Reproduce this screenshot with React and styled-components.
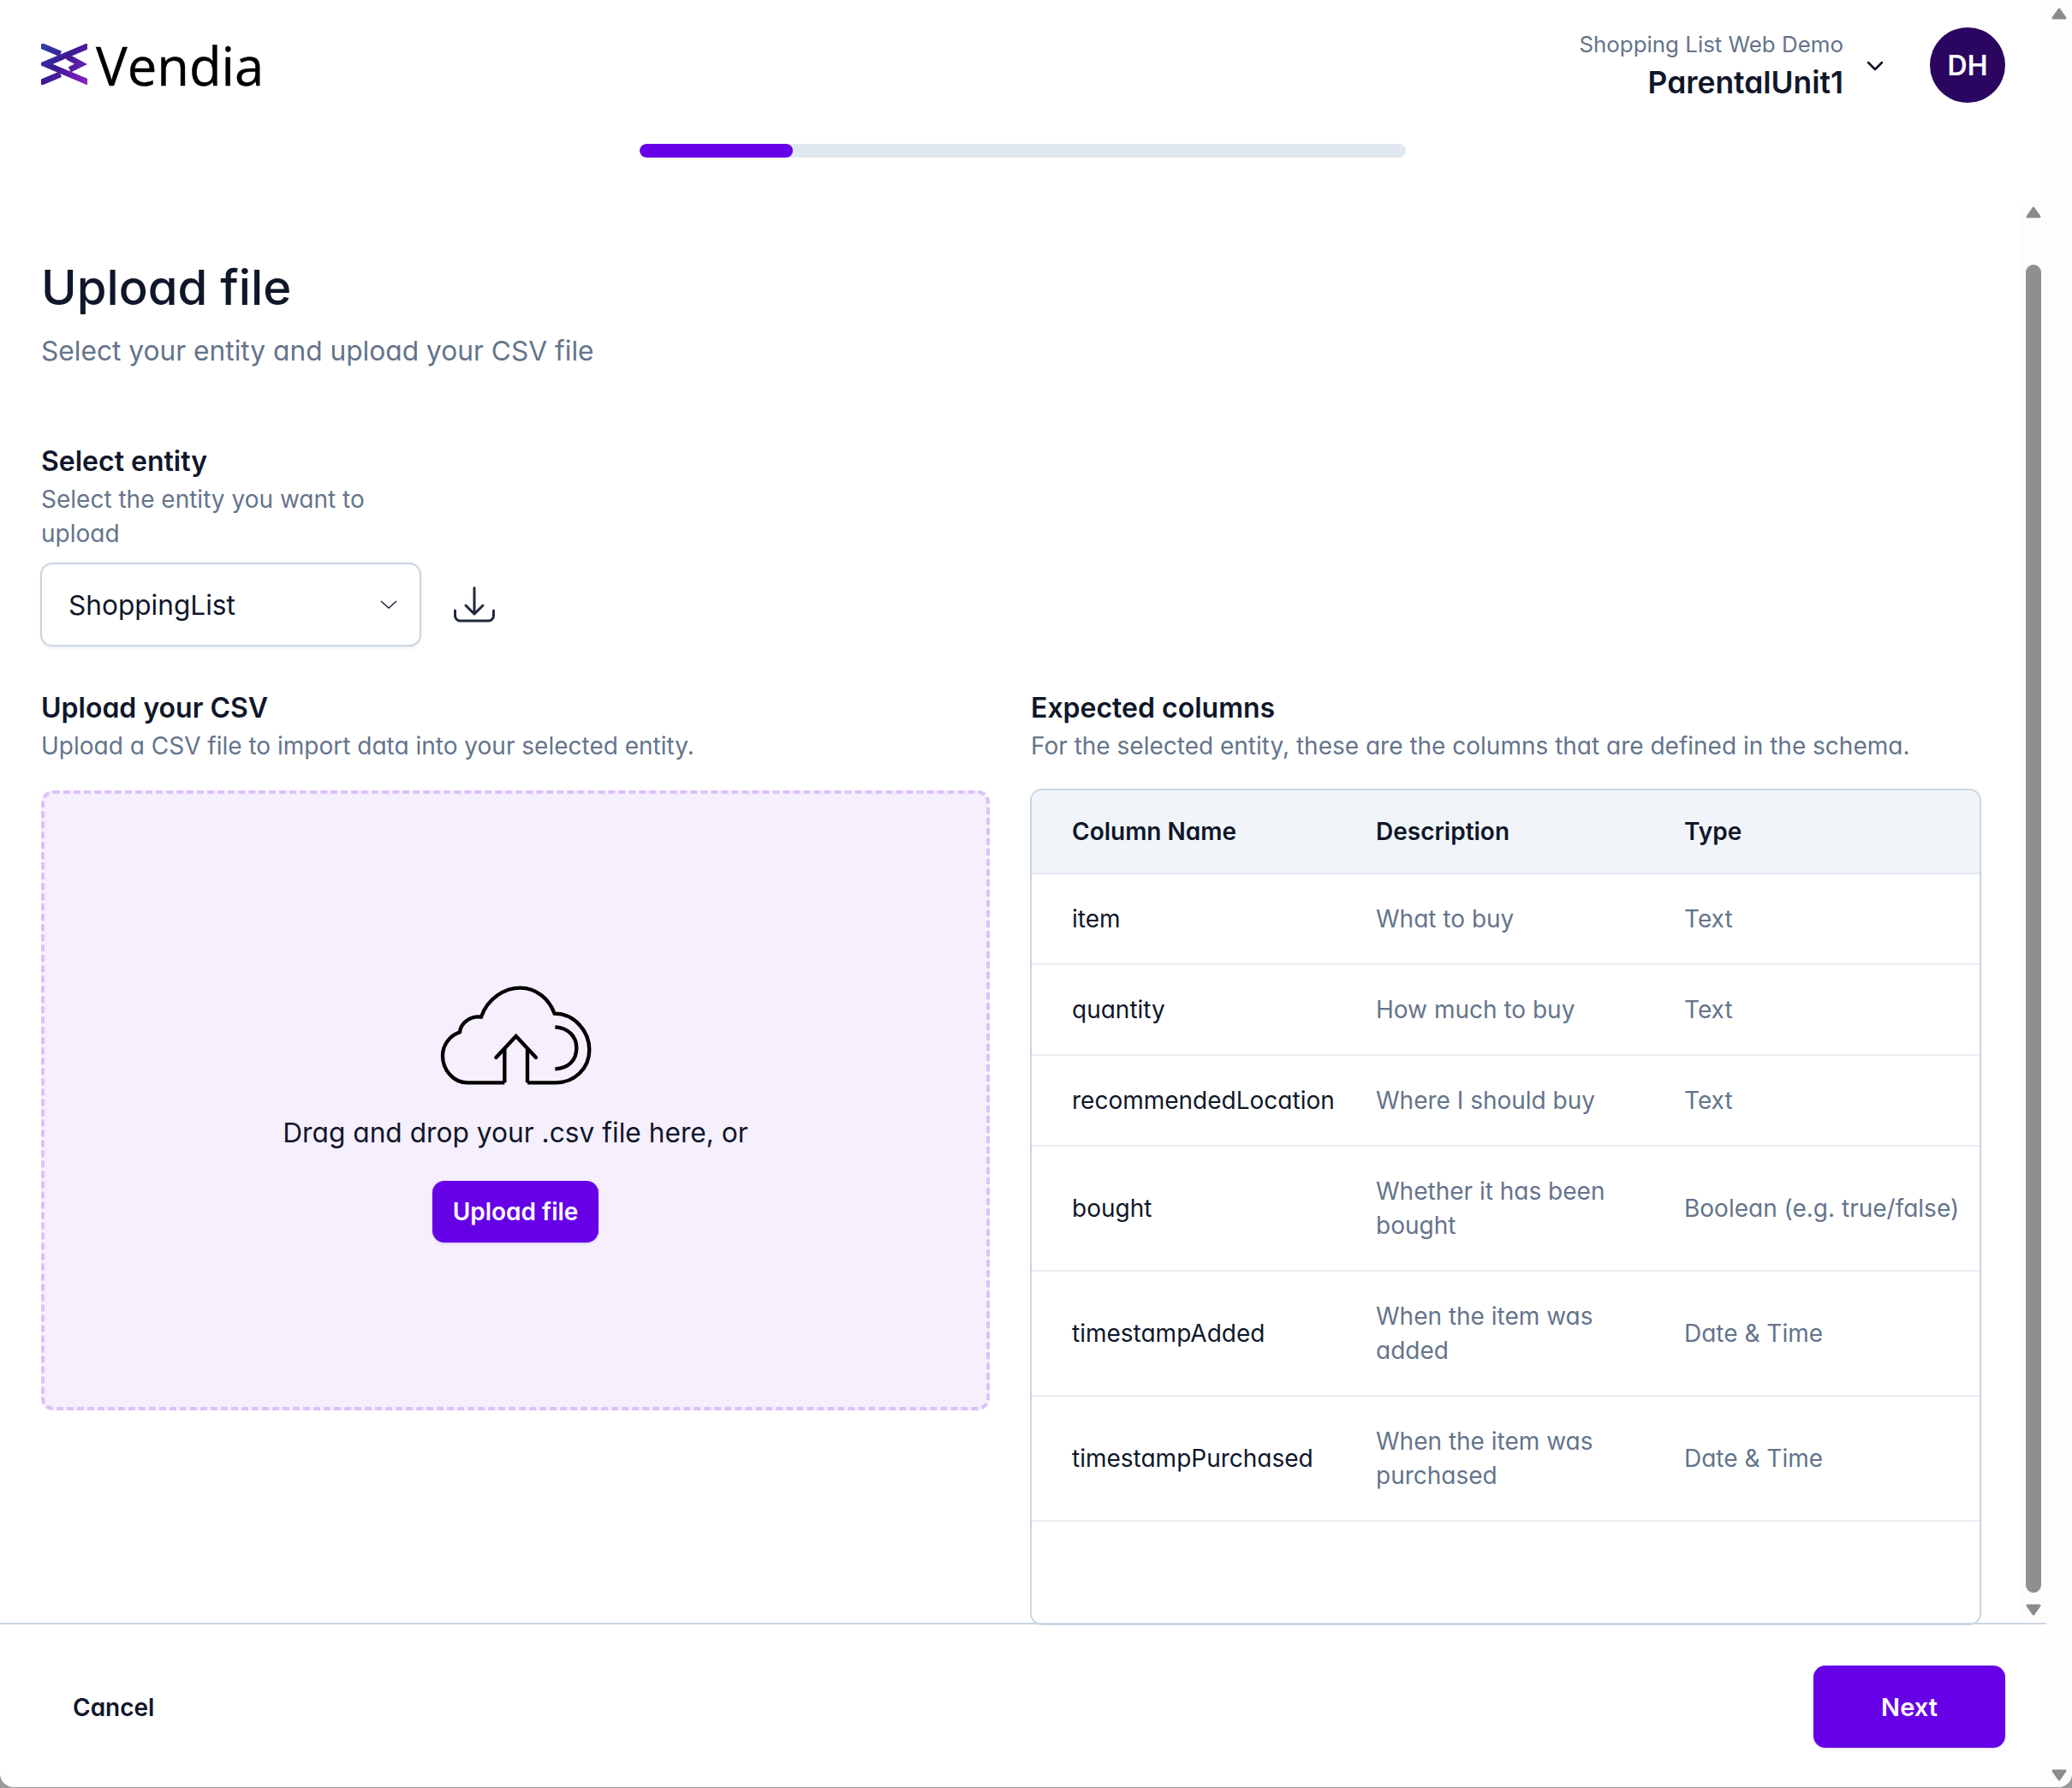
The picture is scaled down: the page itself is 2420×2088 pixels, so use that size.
import React from "react";
import styled, { createGlobalStyle } from "styled-components";

const Global = createGlobalStyle`
  * { box-sizing: border-box; }
  html, body { margin: 0; padding: 0; background: #9a9a9a; }
  body {
    font-family: Inter, "Noto Sans", "Liberation Sans", sans-serif;
    font-feature-settings: "cv11" 1;
    color: #0f172a;
  }
`;

const Window = styled.div`
  width: 2420px;
  height: 2087px;
  display: flex;
  background: #fff;
  border-radius: 0 0 16px 16px;
  overflow: hidden;
`;
const Main = styled.div`
  width: 2390px;
  display: flex;
  flex-direction: column;
`;
const OuterBar = styled.div`
  flex: 1;
  background: #fdfdfd;
  padding: 9px 6px 7px;
  display: flex;
  flex-direction: column;
  justify-content: space-between;
`;
const Header = styled.header`
  height: 168px;
  padding: 32px 48px 0 48px;
  display: flex;
  justify-content: space-between;
  align-items: flex-start;
`;
const Logo = styled.div`
  display: flex;
  align-items: center;
  gap: 10px;
  margin-top: 19px;
  height: 48px;
`;
const Wordmark = styled.span`
  font-family: "Open Sans", "Noto Sans", sans-serif;
  font-feature-settings: normal;
  font-size: 61.5px;
  font-weight: 500;
  line-height: 48px;
  -webkit-text-stroke: 0.4px #000;
  color: #000;
  position: relative;
  top: 1px;
`;
const Account = styled.div`
  display: flex;
  align-items: flex-start;
`;
const AccountText = styled.div`
  text-align: right;
  margin-right: 27px;
`;
const AccountApp = styled.div`
  font-size: 25.9px;
  line-height: 40px;
  color: #64748b;
`;
const AccountUser = styled.div`
  font-size: 35.4px;
  line-height: 44px;
  font-weight: 600;
  color: #0f172a;
  margin-top: 3px;
`;
const AccountChevron = styled.svg`
  width: 20px;
  height: 12px;
  margin-top: 39px;
  margin-right: 54px;
`;
const Avatar = styled.div`
  width: 88px;
  height: 88px;
  border-radius: 50%;
  background: #2a0660;
  color: #fff;
  font-size: 32px;
  font-weight: 600;
  display: flex;
  align-items: center;
  justify-content: center;
`;
const ProgressRow = styled.div`
  display: flex;
  justify-content: center;
  padding-right: 1px;
  height: 67px;
`;
const Track = styled.div`
  width: 895px;
  height: 16px;
  background: #e2e8f0;
  border-radius: 8px;
  overflow: hidden;
`;
const Fill = styled.div`
  height: 100%;
  background: #6600e6;
  border-radius: 8px;
`;
const Body = styled.div`
  flex: 1;
  display: flex;
  min-height: 0;
`;
const Content = styled.main`
  flex: 1;
  min-width: 0;
  padding: 68px 46px 0 48px;
  display: flex;
  flex-direction: column;
`;
const InnerBar = styled.div`
  width: 30px;
  background: #fdfdfd;
  padding: 6px 6px 8px;
  display: flex;
  flex-direction: column;
  align-items: center;
`;
const Thumb = styled.div`
  width: 18px;
  height: 1551px;
  margin: 54px 0 13px;
  background: #8f8f8f;
  border-radius: 9px;
`;
const Arrow = styled.svg`
  width: 18px;
  height: 14px;
  display: block;
  flex: none;
`;
const Title = styled.h1`
  margin: 0;
  font-size: 56.3px;
  line-height: 66px;
  font-weight: 500;
  color: #0f172a;
`;
const Subtitle = styled.p`
  margin: 19px 0 0;
  font-size: 31.7px;
  line-height: 44px;
  color: #64748b;
`;
const Label = styled.h2`
  margin: ${(p) => p.$top || 0}px 0 0;
  font-size: 32px;
  line-height: 44px;
  font-weight: 600;
  color: #0f172a;
`;
const Hint = styled.p`
  margin: 2px 0 0;
  font-size: 28px;
  line-height: 40px;
  color: #64748b;
  max-width: ${(p) => p.$max || "none"};
`;
const SelectRow = styled.div`
  display: flex;
  align-items: center;
  gap: 38px;
  margin-top: 14px;
`;
const Select = styled.div`
  width: 445px;
  height: 98px;
  margin-left: -1px;
  border: 2px solid #cbd5e1;
  border-radius: 14px;
  background: #fff;
  box-shadow: 0 2px 3px rgba(15, 23, 42, 0.07);
  padding: 0 26px 0 31px;
  display: flex;
  align-items: center;
  justify-content: space-between;
  font-size: 31.6px;
  color: #0f172a;
`;
const Columns = styled.div`
  flex: 1;
  min-height: 0;
  display: grid;
  grid-template-columns: 1108px 1111px;
  column-gap: 47px;
  margin-top: 50px;
`;
const Column = styled.section`
  display: flex;
  flex-direction: column;
  min-height: 0;
`;
const ColumnHead = styled.div`
  padding-left: ${(p) => p.$inset || 0}px;
`;
const Dropzone = styled.div`
  height: 724px;
  margin-top: 32px;
  border: 4px dashed #dbc2fa;
  border-radius: 14px;
  background: #f6effd;
  display: flex;
  flex-direction: column;
  align-items: center;
  padding-top: 214px;
`;
const CloudSvg = styled.svg`
  width: 200px;
  height: 135px;
  margin-right: 3px;
  flex: none;
`;
const DropText = styled.p`
  margin: 25px 0 0;
  font-size: 31.7px;
  line-height: 44px;
  color: #0f172a;
`;
const PrimaryButton = styled.button`
  border: 0;
  border-radius: 14px;
  background: #6600e6;
  color: #fff;
  font-family: inherit;
  font-feature-settings: inherit;
  font-weight: 600;
  font-size: ${(p) => p.$size || 28}px;
  width: ${(p) => p.$w}px;
  height: ${(p) => p.$h}px;
  box-shadow: 0 1px 3px rgba(102, 0, 230, 0.2);
`;
const UploadButton = styled(PrimaryButton)`
  margin-top: 34px;
`;
const TableWrap = styled.div`
  flex: 1;
  margin-top: 30px;
  margin-bottom: -3px;
  min-height: 0;
  border: 2px solid #cbd5e1;
  border-radius: 14px;
  overflow: hidden;
`;
const Table = styled.table`
  width: 100%;
  table-layout: fixed;
  border-collapse: separate;
  border-spacing: 0;
`;
const Th = styled.th`
  height: 98px;
  padding: 0 0 0 ${(p) => p.$pad || 48}px;
  text-align: left;
  background: #f1f5f9;
  border-bottom: 2px solid #e2e8f0;
  font-size: 28px;
  font-weight: 600;
  color: #0f172a;
  width: ${(p) => p.$w || "auto"};
`;
const Td = styled.td`
  height: ${(p) => (p.$tall ? 146 : 106)}px;
  padding: 0 8px 0 ${(p) => p.$pad || 48}px;
  border-bottom: 2px solid #e8edf3;
  font-size: 28px;
  line-height: 40px;
  color: ${(p) => (p.$strong ? "#0f172a" : "#64748b")};
`;
const Footer = styled.footer`
  height: 192px;
  border-top: 2px solid #cbd5e1;
  padding: 48px 48px 0 37px;
  display: flex;
  justify-content: space-between;
  align-items: flex-start;
`;
const CancelButton = styled.button`
  border: 0;
  background: none;
  font-family: inherit;
  font-feature-settings: inherit;
  font-size: 28px;
  font-weight: 600;
  color: #0f172a;
  height: 96px;
  padding: 2px 48px 0;
`;

const ArrowUp = () => (
  <Arrow viewBox="0 0 18 14">
    <polygon points="9,2 16,12 2,12" fill="#8b8b8b" stroke="#8b8b8b" strokeWidth="3" strokeLinejoin="round" />
  </Arrow>
);
const ArrowDown = () => (
  <Arrow viewBox="0 0 18 14">
    <polygon points="9,12 16,2 2,2" fill="#8b8b8b" stroke="#8b8b8b" strokeWidth="3" strokeLinejoin="round" />
  </Arrow>
);

const VendiaMark = () => (
  <svg width="54" height="48" viewBox="0 0 162 145" fill="none">
    <defs>
      <linearGradient id="vg" gradientUnits="userSpaceOnUse" x1="0" y1="0" x2="162" y2="145">
        <stop offset="0" stopColor="#2b44a8" />
        <stop offset="0.45" stopColor="#3d1a94" />
        <stop offset="1" stopColor="#8f22c8" />
      </linearGradient>
    </defs>
    <g stroke="url(#vg)" strokeWidth="21">
      <polyline points="175,4 14,72 175,140" />
      <line x1="-10" y1="3" x2="68" y2="36" />
      <polyline points="92,46 140,72 100,92" />
      <line x1="68" y1="108" x2="-10" y2="141" />
    </g>
  </svg>
);

const CloudIcon = () => (
  <CloudSvg viewBox="0 0 600 405" fill="none" stroke="#000" strokeWidth="13">
    <path d="M265 370H135C85 370 48 325 48 275C48 235 75 205 108 193C112 160 145 135 183 140C205 75 265 38 320 38C375 38 420 75 440 128C510 128 562 190 562 255C562 320 510 370 445 370H345" />
    <path d="M265 370V250M345 370V250" />
    <path d="M235 282L305 207L375 282" strokeLinecap="round" />
    <path d="M442 175C490 178 517 210 517 248C517 290 490 320 442 322" />
  </CloudSvg>
);

const DownloadIcon = () => (
  <svg width="48" height="42" viewBox="0 0 48 42" fill="none" stroke="#1e293b" strokeWidth="3" strokeLinecap="round" strokeLinejoin="round">
    <path d="M24 1.5V32M14 22L24 32L34 22" />
    <path d="M1.5 28V34A6 6 0 0 0 7.5 40H40.5A6 6 0 0 0 46.5 34V28" />
  </svg>
);

const rows = [
  ["item", "What to buy", "Text"],
  ["quantity", "How much to buy", "Text"],
  ["recommendedLocation", "Where I should buy", "Text"],
  ["bought", "Whether it has been bought", "Boolean (e.g. true/false)", true],
  ["timestampAdded", "When the item was added", "Date & Time", true],
  ["timestampPurchased", "When the item was purchased", "Date & Time", true],
];

export default function App() {
  return (
    <>
      <Global />
      <Window>
        <Main>
          <Header>
            <Logo>
              <VendiaMark />
              <Wordmark>Vendia</Wordmark>
            </Logo>
            <Account>
              <AccountText>
                <AccountApp>Shopping List Web Demo</AccountApp>
                <AccountUser>ParentalUnit1</AccountUser>
              </AccountText>
              <AccountChevron viewBox="0 0 20 12" fill="none" stroke="#0f172a" strokeWidth="2.5" strokeLinecap="round" strokeLinejoin="round">
                <path d="M2 2L10 10L18 2" />
              </AccountChevron>
              <Avatar>DH</Avatar>
            </Account>
          </Header>
          <ProgressRow>
            <Track>
              <Fill style={{ width: `${(179 / 895) * 100}%` }} />
            </Track>
          </ProgressRow>
          <Body>
            <Content>
              <Title>Upload file</Title>
              <Subtitle>Select your entity and upload your CSV file</Subtitle>
              <Label $top={85}>Select entity</Label>
              <Hint $max="445px">Select the entity you want to upload</Hint>
              <SelectRow>
                <Select>
                  ShoppingList
                  <svg width="20" height="10" viewBox="0 0 20 10" fill="none" stroke="#1e293b" strokeWidth="1.6">
                    <path d="M1 1L10 9L19 1" />
                  </svg>
                </Select>
                <DownloadIcon />
              </SelectRow>
              <Columns>
                <Column>
                  <Label>Upload your CSV</Label>
                  <Hint>Upload a CSV file to import data into your selected entity.</Hint>
                  <Dropzone>
                    <CloudIcon />
                    <DropText>Drag and drop your .csv file here, or</DropText>
                    <UploadButton $w={194} $h={72}>Upload file</UploadButton>
                  </Dropzone>
                </Column>
                <Column>
                  <ColumnHead $inset={1}>
                    <Label>Expected columns</Label>
                    <Hint>For the selected entity, these are the columns that are defined in the schema.</Hint>
                  </ColumnHead>
                  <TableWrap>
                    <Table>
                      <thead>
                        <tr>
                          <Th $w="354px" $pad={47}>Column Name</Th>
                          <Th $w="361px">Description</Th>
                          <Th $pad={47}>Type</Th>
                        </tr>
                      </thead>
                      <tbody>
                        {rows.map(([name, desc, type, tall]) => (
                          <tr key={name}>
                            <Td $strong $tall={tall} $pad={47}>{name}</Td>
                            <Td $tall={tall}>{desc}</Td>
                            <Td $tall={tall} $pad={47}>{type}</Td>
                          </tr>
                        ))}
                      </tbody>
                    </Table>
                  </TableWrap>
                </Column>
              </Columns>
            </Content>
            <InnerBar>
              <ArrowUp />
              <Thumb />
              <ArrowDown />
            </InnerBar>
          </Body>
          <Footer>
            <CancelButton>Cancel</CancelButton>
            <PrimaryButton $w={224} $h={96} $size={29}>Next</PrimaryButton>
          </Footer>
        </Main>
        <OuterBar>
          <ArrowUp />
          <ArrowDown />
        </OuterBar>
      </Window>
    </>
  );
}
